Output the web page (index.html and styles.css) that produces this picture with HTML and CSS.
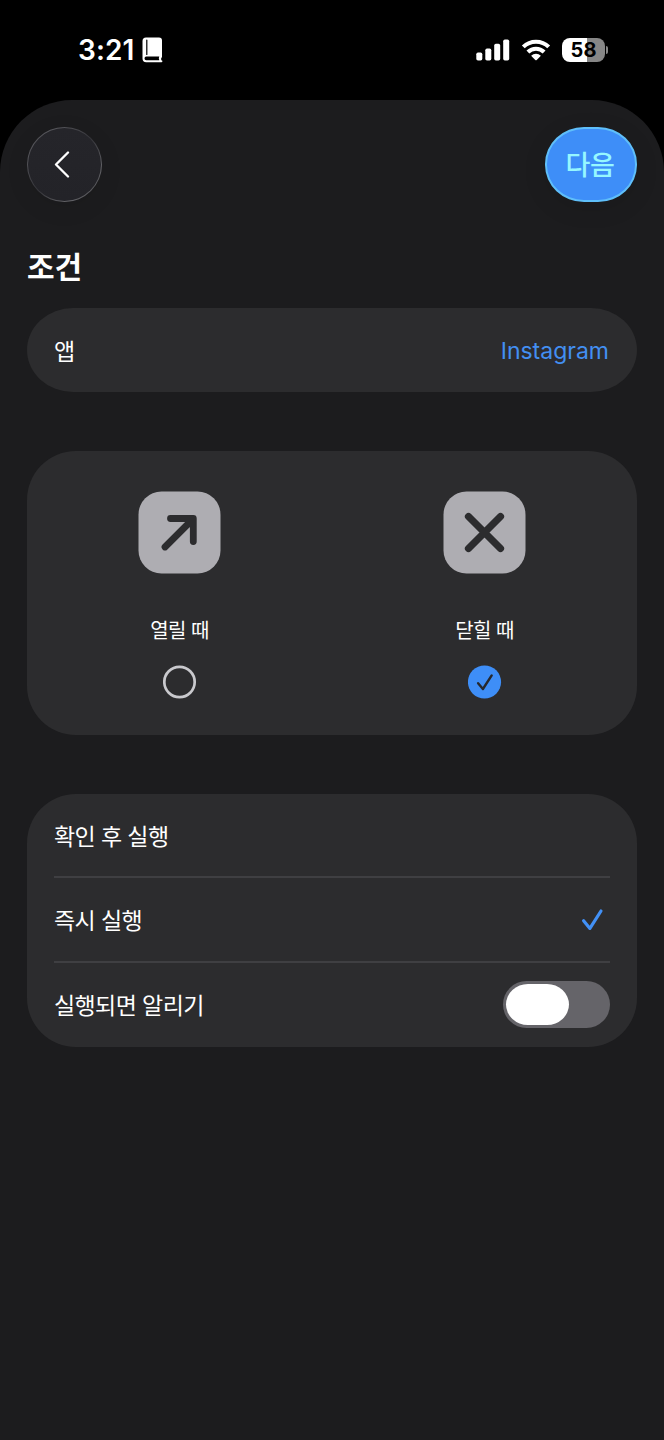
FILE: index.html
```html
<!DOCTYPE html>
<html lang="ko">
<head>
<meta charset="utf-8">
<title>조건</title>
<link rel="stylesheet" href="styles.css">
</head>
<body>
<div class="status">
  <div class="status-left">
    <span class="time">3:21</span>
    <svg class="book" width="21" height="26" viewBox="0 0 21 26"><path d="M4 .5h13a3 3 0 0 1 3 3v16.200q0 1-.8 1.300v2.200h.2a1 1 0 0 1 0 2H4.200a3.700 3.700 0 0 1-3.700-3.700V4A3.500 3.500 0 0 1 4 .5z" fill="#fff"/><path d="M4.800 3v14.500" stroke="#000" stroke-width="1.200" stroke-linecap="round"/><path d="M4.300 19.600h13q-1 1.700 0 3.600h-13a1.800 1.800 0 0 1 0-3.600z" fill="#000"/></svg>
  </div>
  <div class="status-right">
    <svg width="34" height="22" viewBox="0 0 34 22" fill="#fff"><rect x=".3" y="13.500" width="6" height="8" rx="1.700"/><rect x="9.300" y="9.500" width="6" height="12" rx="1.700"/><rect x="18.200" y="4.700" width="6" height="16.800" rx="1.700"/><rect x="27.200" y=".5" width="6" height="21" rx="1.700"/></svg>
    <svg width="30" height="22" viewBox="0 0 30 22"><g fill="none" stroke="#fff" stroke-width="4.100"><path d="M2.300 7.900a18.200 18.200 0 0 1 25.400 0"/><path d="M6.900 13a11.700 11.700 0 0 1 16.200 0"/></g><path d="M10.100 16.700a7 7 0 0 1 9.800 0l-4.200 4.200q-.7.600-1.400 0z" fill="#fff"/></svg>
    <div class="battery"><span class="cell">58</span><span class="nub"></span></div>
  </div>
</div>
<main class="sheet">
  <header class="nav">
    <button class="back" aria-label="뒤로"><svg width="18" height="28" viewBox="0 0 18 28"><path d="M15 1.500 3 13.500l12 12" fill="none" stroke="#fff" stroke-width="2.300" stroke-linecap="round" stroke-linejoin="round"/></svg></button>
    <button class="next">다음</button>
  </header>
  <h1 class="title">조건</h1>
  <section class="card app"><span class="app-label">앱</span><span class="app-name">Instagram</span></section>
  <section class="card choices">
    <div class="choice">
      <svg class="tile" width="83" height="83" viewBox="0 0 83 83"><rect x=".5" y=".5" width="82" height="82" rx="23" fill="#aeadb2"/><path d="M27 56 55 28M32.500 27.500h22.800v23" fill="none" stroke="#2c2c2e" stroke-width="6.800" stroke-linecap="round" stroke-linejoin="round"/></svg>
      <span class="label">열릴 때</span>
      <svg width="34" height="34" viewBox="0 0 34 34"><circle cx="16.500" cy="17" r="15.200" fill="none" stroke="#c9c9cd" stroke-width="2.700"/></svg>
    </div>
    <div class="choice">
      <svg class="tile" width="83" height="83" viewBox="0 0 83 83"><rect x=".5" y=".5" width="82" height="82" rx="23" fill="#aeadb2"/><path d="m25.500 25.500 32 32M57.500 25.500l-32 32" fill="none" stroke="#2c2c2e" stroke-width="7.200" stroke-linecap="round"/></svg>
      <span class="label">닫힐 때</span>
      <svg width="34" height="34" viewBox="0 0 34 34"><circle cx="16.500" cy="17" r="16.600" fill="#3e8ef7"/><path d="m10.100 18.200 4.800 5.800 8.800-13.600" fill="none" stroke="#26282d" stroke-width="2.400" stroke-linecap="round" stroke-linejoin="round"/></svg>
    </div>
  </section>
  <section class="card list">
    <div class="row"><span>확인 후 실행</span></div>
    <div class="row"><span>즉시 실행</span><svg class="check" width="24" height="24" viewBox="0 0 24 24"><path d="m2.600 12.700 6.300 7.700L20 3" fill="none" stroke="#4290f5" stroke-width="3.200" stroke-linecap="round" stroke-linejoin="round"/></svg></div>
    <div class="row"><span>실행되면 알리기</span><span class="switch"><span class="knob"></span></span></div>
  </section>
</main>
</body>
</html>
```

FILE: styles.css
```css
* { box-sizing: border-box; }
body {
  margin: 0;
  height: 1440px;
  background: #000;
  color: #fff;
  font-family: "Noto Sans CJK KR", sans-serif;
  display: flex;
  flex-direction: column;
  overflow: hidden;
}
.status {
  height: 100px;
  padding: 0 56px 0 78px;
  display: flex;
  justify-content: space-between;
  align-items: center;
}
.status-left, .status-right { display: flex; align-items: center; }
.status-left { gap: 8px; }
.time { font: 600 28px/34px Inter, sans-serif; letter-spacing: .1px; }
.status-right { gap: 11px; }
.battery { display: flex; align-items: center; gap: 1px; }
.cell {
  width: 43px;
  height: 24px;
  border-radius: 8px;
  background: linear-gradient(90deg, #fff 58%, #868686 58%);
  color: #000;
  text-align: center;
  font: 700 20px/24px Inter, sans-serif;
}
.nub { width: 2px; height: 8px; border-radius: 0 3px 3px 0; background: #868686; }
.sheet {
  flex: 1;
  background: #1c1c1e;
  border-radius: 72px 72px 0 0;
  padding: 27px 27px 0;
  display: flex;
  flex-direction: column;
}
.nav { display: flex; justify-content: space-between; }
.back, .next { height: 75px; padding: 0; font-family: inherit; }
.back {
  width: 75px;
  border-radius: 50%;
  border: 1.500px solid transparent;
  background: linear-gradient(#25252a, #232328) padding-box,
    linear-gradient(135deg, #4b4b50, #57575c 20%, #35353a 50%, #66666a 78%, #3c3c41) border-box;
  display: flex;
  align-items: center;
  justify-content: center;
  padding-right: 5px;
  box-shadow: 0 6px 24px rgba(0, 0, 0, .08);
}
.next {
  width: 92px;
  border: 2px solid #5fbffa;
  border-radius: 39px / 37px;
  background: #3e8ef8;
  color: #96f7ff;
  font-size: 27px;
  font-weight: 500;
  line-height: 66px;
  padding: 0 2px 1px 0;
  letter-spacing: -.3px;
  box-shadow: 0 6px 24px rgba(0, 0, 0, .1);
}
.title { margin: 41px 0 20px; font-size: 30px; font-weight: 700; line-height: 45px; letter-spacing: -.2px; }
.card { background: #2c2c2e; }
.app {
  height: 84px;
  border-radius: 46px / 42px;
  padding: 0 27px;
  display: flex;
  justify-content: space-between;
  align-items: center;
  font-size: 23px;
}
.app-label { padding-bottom: 1px; }
.app-name { font: 400 23px/28px Inter, sans-serif; color: #438ff2; padding: 2px 1px 0 0; }
.choices {
  margin-top: 59px;
  height: 284px;
  border-radius: 49px;
  display: grid;
  grid-template-columns: 1fr 1fr;
}
.choice { display: flex; flex-direction: column; align-items: center; padding-top: 40px; }
.label { font-size: 20px; line-height: 30px; margin: 40.500px 0 20.500px; letter-spacing: -.6px; }
.list {
  margin-top: 59px;
  height: 253px;
  border-radius: 49px;
  padding: 0 27px;
}
.row {
  height: 85px;
  display: flex;
  align-items: center;
  justify-content: space-between;
  font-size: 23px;
  letter-spacing: -.6px;
}
.row > span:first-child { padding-bottom: 1px; }
.row:first-child { height: 82px; }
.row + .row { border-top: 2px solid #3f3f42; }
.check { margin-right: 5px; }
.switch { width: 107px; height: 47px; border-radius: 24px; background: #656469; padding: 3px; display: flex; }
.knob { width: 63px; height: 41px; border-radius: 22px / 20.500px; background: #fff; }
```
